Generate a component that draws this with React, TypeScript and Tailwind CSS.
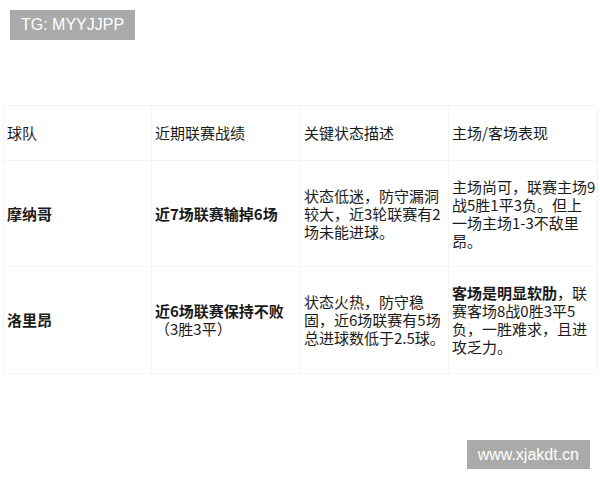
import React from 'react';

type Row = {
  team: string;
  record: React.ReactNode;
  status: string[];
  venue: React.ReactNode;
};

const rows: Row[] = [
  {
    team: '摩纳哥',
    record: <span className="font-bold">近7场联赛输掉6场</span>,
    status: ['状态低迷，防守漏洞', '较大，近3轮联赛有2', '场未能进球。'],
    venue: (
      <>
        主场尚可，联赛主场9
        <br />
        战5胜1平3负。但上
        <br />
        一场主场1-3不敌里
        <br />
        昂。
      </>
    ),
  },
  {
    team: '洛里昂',
    record: (
      <>
        <span className="font-bold">近6场联赛保持不败</span>
        <br />
        （3胜3平）
      </>
    ),
    status: ['状态火热，防守稳', '固，近6场联赛有5场', '总进球数低于2.5球。'],
    venue: (
      <>
        <span className="font-bold">客场是明显软肋</span>，联
        <br />
        赛客场8战0胜3平5
        <br />
        负，一胜难求，且进
        <br />
        攻乏力。
      </>
    ),
  },
];

const Cell: React.FC<{ children: React.ReactNode; className?: string }> = ({ children, className = '' }) => (
  <div className={`flex items-center pl-[3px] pr-[1px] border-r border-b border-[#f4f4f4] whitespace-nowrap ${className}`}>
    <div>{children}</div>
  </div>
);

export default function App() {
  return (
    <div
      className="w-[600px] h-[480px] bg-white flex flex-col text-[#1a1a1a] text-[15px] leading-[18px]"
      style={{ fontFamily: '"Noto Sans CJK SC", "Noto Sans", sans-serif' }}
    >
      <div className="mt-[10px] ml-[10px] self-start bg-[#aaaaaa] px-[11px] h-[30px] flex items-center">
        <span className="text-white text-[16px]" style={{ fontFamily: '"Liberation Sans", Arial, sans-serif' }}>
          TG: MYYJJPP
        </span>
      </div>

      <div className="mt-[65px] mx-[3px] grid grid-cols-[148px_149px_148px_149px] border-t border-l border-[#f4f4f4]">
        <Cell className="h-[55px]">球队</Cell>
        <Cell className="h-[55px]">近期联赛战绩</Cell>
        <Cell className="h-[55px]">关键状态描述</Cell>
        <Cell className="h-[55px]">主场/客场表现</Cell>
        {rows.map((row, i) => (
          <React.Fragment key={row.team}>
            <Cell className={i === 0 ? 'h-[106px]' : 'h-[107px]'}>
              <span className="font-bold">{row.team}</span>
            </Cell>
            <Cell className={i === 0 ? 'h-[106px]' : 'h-[107px]'}>{row.record}</Cell>
            <Cell className={i === 0 ? 'h-[106px]' : 'h-[107px]'}>
              {row.status.map((line, j) => (
                <React.Fragment key={j}>
                  {j > 0 && <br />}
                  {line}
                </React.Fragment>
              ))}
            </Cell>
            <Cell className={i === 0 ? 'h-[106px]' : 'h-[107px]'}>{row.venue}</Cell>
          </React.Fragment>
        ))}
      </div>

      <div className="mt-[66px] mr-[10px] self-end bg-[#aaaaaa] px-[11px] h-[29px] flex items-center">
        <span className="text-white text-[16px]" style={{ fontFamily: '"Liberation Sans", Arial, sans-serif' }}>
          www.xjakdt.cn
        </span>
      </div>
    </div>
  );
}
